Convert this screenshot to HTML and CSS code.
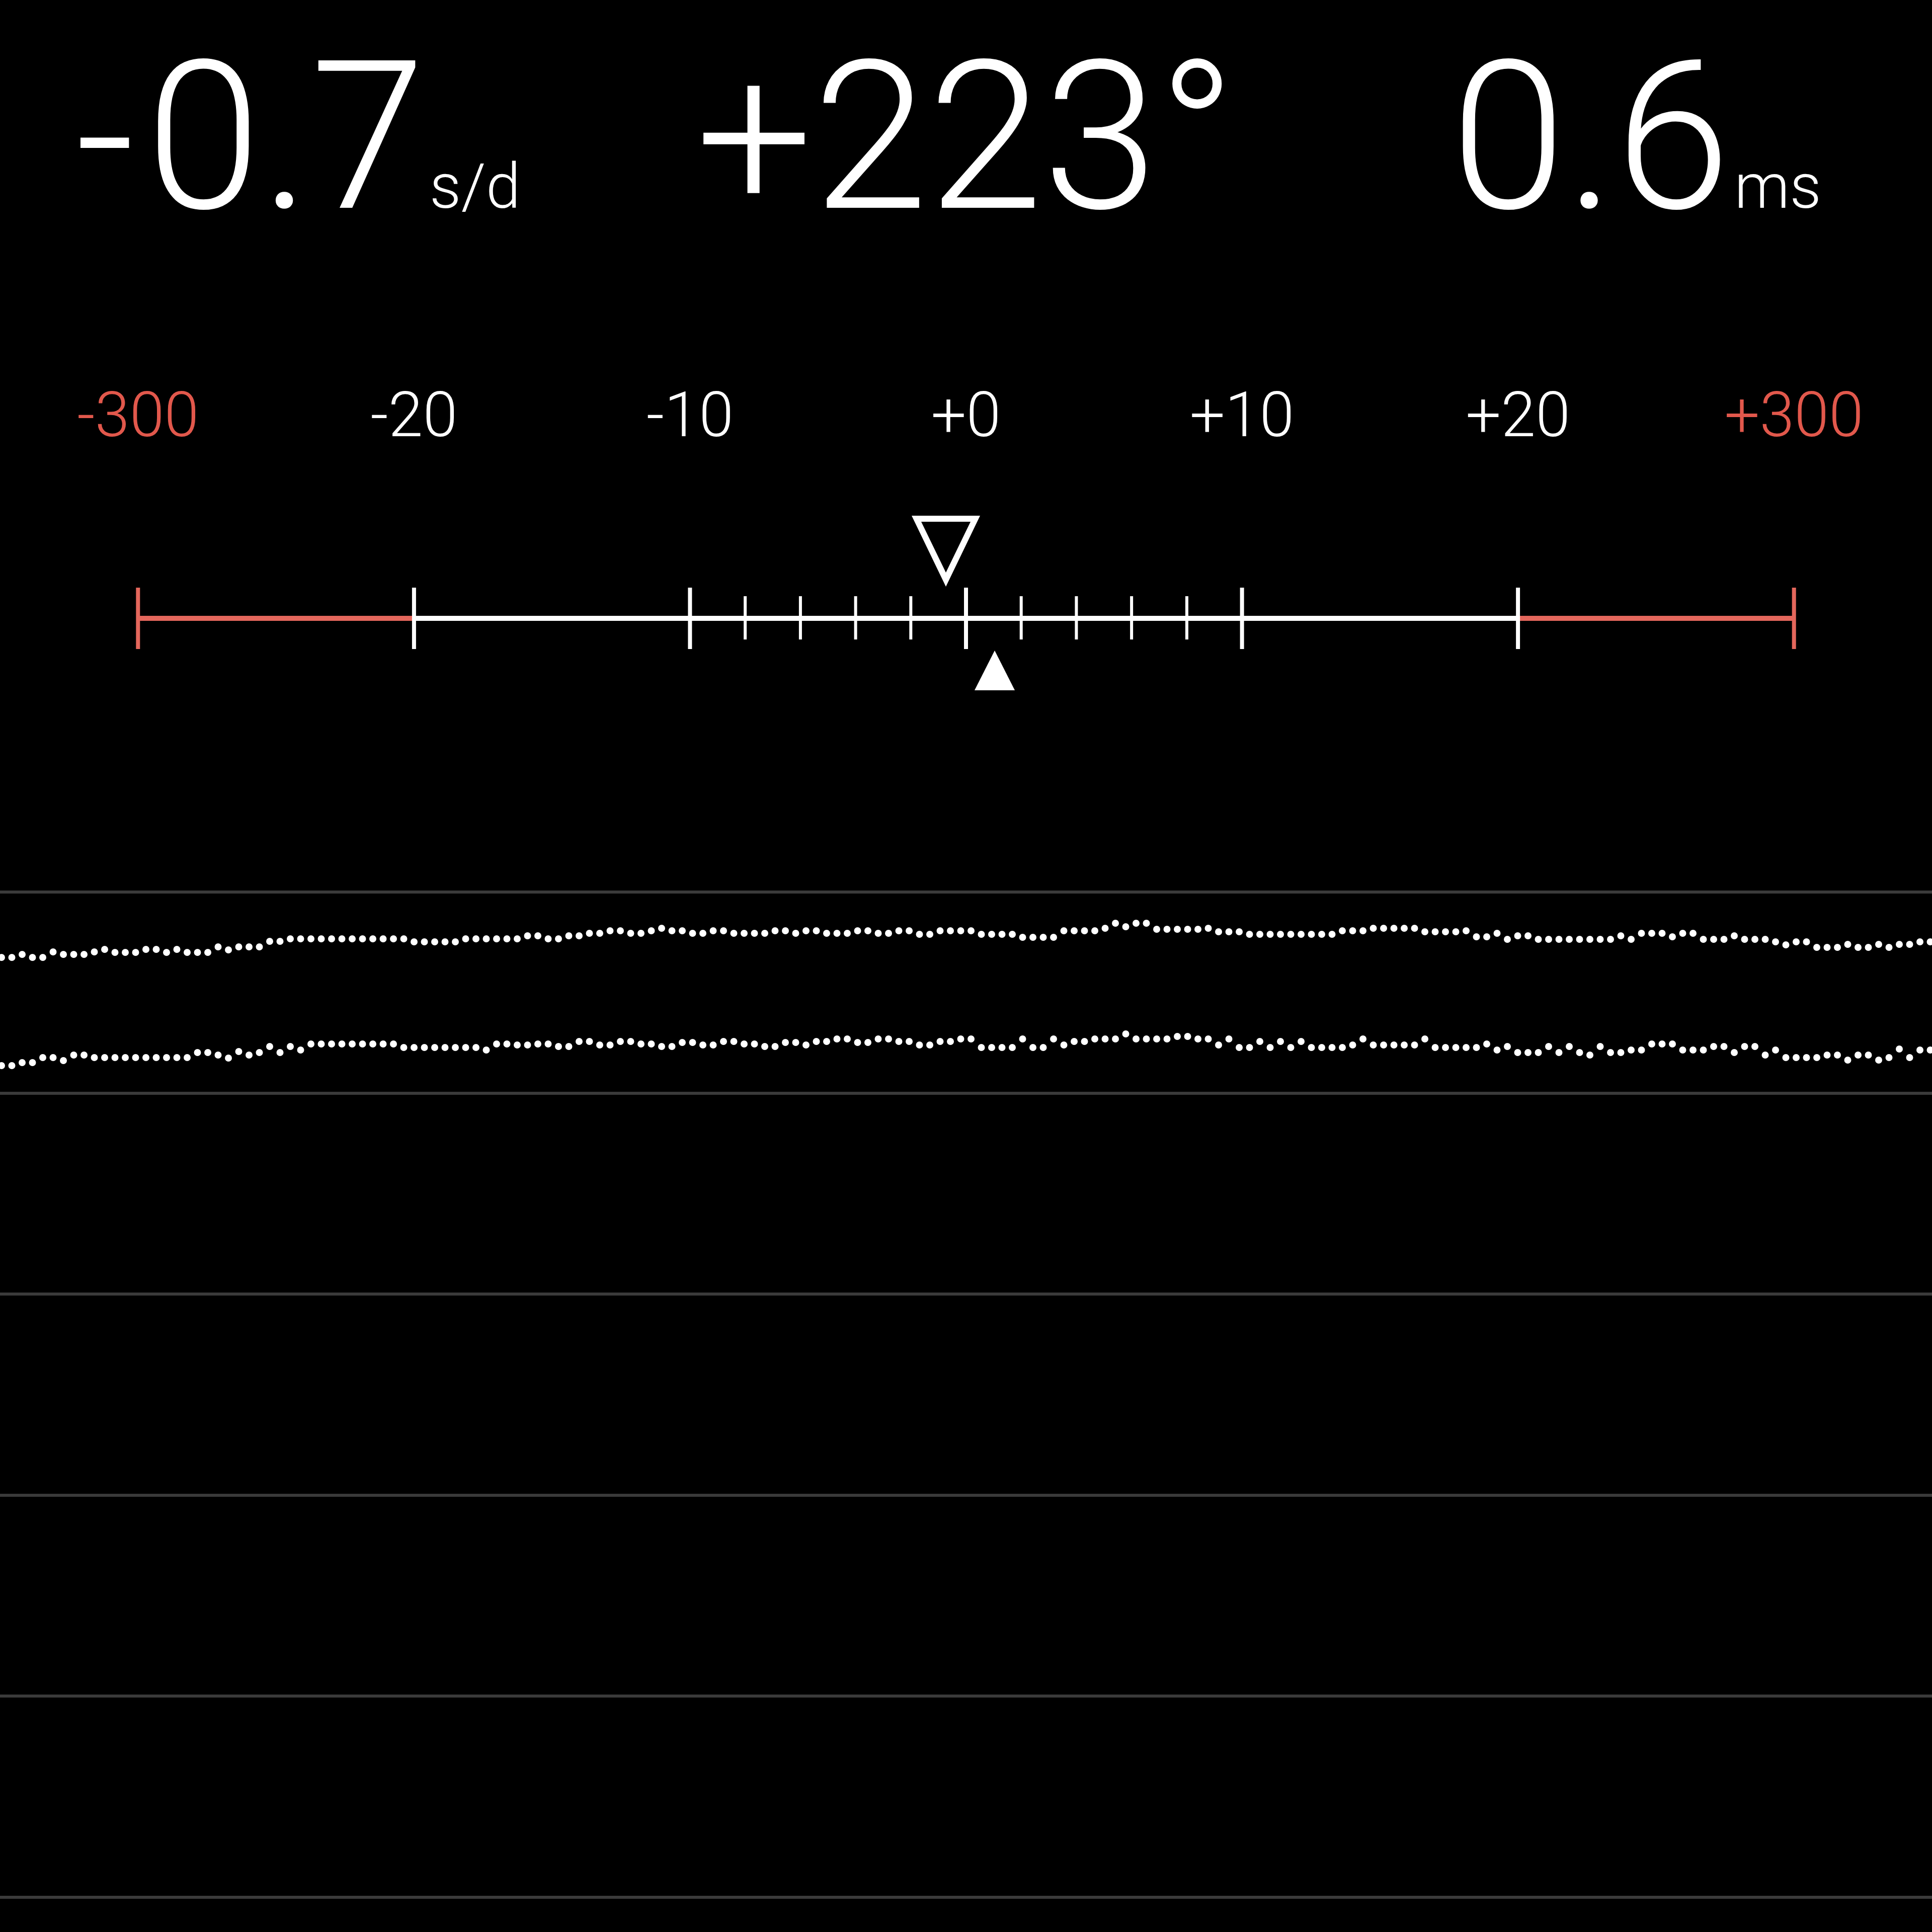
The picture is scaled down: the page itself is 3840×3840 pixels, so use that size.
FILE: index.html
```html
<!DOCTYPE html>
<html lang="en">
<head>
<meta charset="utf-8">
<title>Timegrapher</title>
<link rel="stylesheet" href="styles.css">
</head>
<body>
<main class="tuner">
  <section class="readouts">
    <div class="readout readout--rate"><span class="value"><span class="sign">-</span>0.7</span><span class="unit">s/d</span></div>
    <div class="readout readout--angle"><span class="value">+223°</span></div>
    <div class="readout readout--beat"><span class="value">0.6</span><span class="unit">ms</span></div>
  </section>

  <section class="labels">
    <span class="label label--warn">-300</span>
    <span class="label">-20</span>
    <span class="label">-10</span>
    <span class="label">+0</span>
    <span class="label">+10</span>
    <span class="label">+20</span>
    <span class="label label--warn">+300</span>
  </section>

  <svg class="scale" viewBox="0 1010 3840 380" width="3840" height="380">
    <line class="bar bar--warn" x1="274.3" y1="1229" x2="822.9" y2="1229"/>
    <line class="bar" x1="822.9" y1="1229" x2="3017.1" y2="1229"/>
    <line class="bar bar--warn" x1="3017.1" y1="1229" x2="3565.7" y2="1229"/>

    <line class="tick tick--major tick--warn" x1="274.3" y1="1168" x2="274.3" y2="1290"/>
    <line class="tick tick--major" x1="822.9" y1="1168" x2="822.9" y2="1290"/>
    <line class="tick tick--major" x1="1371.4" y1="1168" x2="1371.4" y2="1290"/>
    <line class="tick tick--major" x1="1920" y1="1168" x2="1920" y2="1290"/>
    <line class="tick tick--major" x1="2468.6" y1="1168" x2="2468.6" y2="1290"/>
    <line class="tick tick--major" x1="3017.1" y1="1168" x2="3017.1" y2="1290"/>
    <line class="tick tick--major tick--warn" x1="3565.7" y1="1168" x2="3565.7" y2="1290"/>

    <line class="tick tick--minor" x1="1481.1" y1="1185" x2="1481.1" y2="1271"/>
    <line class="tick tick--minor" x1="1590.9" y1="1185" x2="1590.9" y2="1271"/>
    <line class="tick tick--minor" x1="1700.6" y1="1185" x2="1700.6" y2="1271"/>
    <line class="tick tick--minor" x1="1810.3" y1="1185" x2="1810.3" y2="1271"/>
    <line class="tick tick--minor" x1="2029.7" y1="1185" x2="2029.7" y2="1271"/>
    <line class="tick tick--minor" x1="2139.4" y1="1185" x2="2139.4" y2="1271"/>
    <line class="tick tick--minor" x1="2249.1" y1="1185" x2="2249.1" y2="1271"/>
    <line class="tick tick--minor" x1="2358.9" y1="1185" x2="2358.9" y2="1271"/>

    <path class="marker marker--target" d="M1812 1025 H1948 L1880 1166 Z M1831 1037 L1880 1138 L1929 1037 Z"/>
    <polygon class="marker marker--current" points="1937,1372 2017,1372 1977,1293"/>
  </svg>

  <section class="chart">
    <div class="chart-row">
      <svg class="trace" id="trace" viewBox="0 1776 3840 394" width="3840" height="394"></svg>
    </div>
    <div class="chart-row"></div>
    <div class="chart-row"></div>
    <div class="chart-row"></div>
    <div class="chart-row"></div>
    <div class="chart-rule"></div>
  </section>
</main>
<script src="script.js"></script>
</body>
</html>
```

FILE: styles.css
```css
html, body {
  margin: 0;
  padding: 0;
  background: #000;
}

body {
  width: 3840px;
  color: #fff;
  font-family: Roboto, "Liberation Sans", sans-serif;
  font-weight: 300;
}

.tuner {
  display: flex;
  flex-direction: column;
}

/* Big readouts */
.readouts {
  display: grid;
  grid-template-columns: 1fr auto 1fr;
  padding-top: 67px;
  font-size: 412px;
  line-height: 1;
  height: 412px;
}

.readout {
  white-space: nowrap;
}

.readout--rate {
  justify-self: start;
  margin-left: 150px;
}

.readout--angle {
  justify-self: center;
}

.readout--beat {
  justify-self: end;
  margin-right: 220px;
}

.sign {
  margin-right: 22px;
}

.unit {
  font-size: 124px;
  line-height: 1;
  margin-left: 8px;
}

/* Scale labels */
.labels {
  display: grid;
  grid-template-columns: repeat(7, 1fr);
  margin-top: 284px;
  font-size: 124px;
  line-height: 1;
  text-align: center;
}

.label--warn {
  color: #e2584c;
}

/* Scale */
.scale {
  display: block;
  margin-top: 123px;
}

.bar {
  stroke: #fff;
  stroke-width: 10;
}

.bar--warn {
  stroke: #e4675c;
}

.tick {
  stroke: #fff;
}

.tick--major {
  stroke-width: 8;
}

.tick--minor {
  stroke-width: 6;
}

.tick--warn {
  stroke: #e4675c;
}

.marker {
  fill: #fff;
  fill-rule: evenodd;
}

/* Chart */
.chart {
  margin-top: 380px;
  display: flex;
  flex-direction: column;
}

.chart-row {
  box-sizing: border-box;
  height: 399.6px;
  border-top: 6px solid #3a3a3a;
}

.chart-rule {
  height: 6px;
  background: #3a3a3a;
}

.trace {
  display: block;
}

.dot {
  fill: #fff;
}
```

FILE: script.js
```js
(function () {
  var TOP = [
    [3,1903],[43,1897],[64,1903],[105,1892],[126,1897],[187,1892],[207,1887],[228,1893],
    [290,1887],[330,1893],[351,1887],[371,1893],[432,1882],[453,1888],[473,1882],[535,1871],
    [576,1866],[821,1872],[924,1866],[1050,1860],[1090,1866],[1130,1860],[1170,1855],
    [1210,1850],[1250,1855],[1290,1850],[1310,1845],[1330,1850],[1370,1855],[1410,1850],
    [1450,1855],[1530,1850],[1570,1855],[1610,1850],[1650,1855],[1700,1850],[1740,1855],
    [1780,1850],[1820,1857],[1860,1850],[1948,1857],[2031,1863],[2110,1850],[2193,1845],
    [2212,1835],[2235,1842],[2257,1835],[2295,1847],[2397,1845],[2420,1852],[2480,1857],
    [2665,1850],[2729,1845],[2828,1852],[2911,1850],[2931,1862],[2972,1855],[2992,1867],
    [3014,1860],[3053,1867],[3218,1860],[3239,1867],[3260,1855],[3300,1855],[3320,1862],
    [3341,1855],[3383,1867],[3443,1860],[3464,1867],[3526,1872],[3546,1878],[3566,1872],
    [3607,1883],[3669,1877],[3689,1883],[3730,1877],[3750,1883],[3770,1877],[3811,1872]
  ];
  var BOTTOM = [
    [6,2118],[35,2112],[75,2102],[115,2108],[136,2097],[177,2102],[381,2092],[422,2097],
    [443,2103],[464,2090],[485,2097],[504,2092],[524,2080],[545,2092],[566,2080],[587,2087],
    [607,2075],[791,2082],[955,2087],[976,2075],[1030,2077],[1070,2075],[1110,2080],
    [1150,2070],[1190,2077],[1230,2070],[1270,2075],[1310,2080],[1350,2072],[1390,2077],
    [1430,2070],[1470,2075],[1510,2080],[1550,2072],[1590,2077],[1630,2070],[1670,2065],
    [1710,2072],[1750,2065],[1790,2070],[1830,2077],[1870,2070],[1900,2065],[1957,2082],
    [2040,2065],[2061,2082],[2082,2065],[2122,2077],[2142,2070],[2184,2065],[2244,2055],
    [2265,2065],[2346,2060],[2388,2065],[2410,2077],[2450,2065],[2471,2082],[2511,2070],
    [2531,2082],[2552,2070],[2573,2082],[2593,2070],[2614,2082],[2696,2077],[2716,2065],
    [2737,2077],[2839,2065],[2860,2082],[2900,2082],[2962,2075],[2983,2087],[3003,2080],
    [3023,2092],[3085,2080],[3106,2092],[3126,2080],[3146,2092],[3167,2097],[3188,2080],
    [3208,2092],[3249,2087],[3290,2075],[3351,2087],[3413,2080],[3453,2092],[3474,2080],
    [3515,2097],[3536,2087],[3556,2102],[3637,2097],[3678,2107],[3699,2097],[3741,2107],
    [3760,2102],[3781,2085],[3802,2102],[3823,2087]
  ];

  function level(points, x) {
    var y = points[0][1];
    for (var i = 0; i < points.length; i++) {
      if (points[i][0] <= x + 8) { y = points[i][1]; } else { break; }
    }
    return y;
  }

  var svg = document.getElementById('trace');
  var ns = 'http://www.w3.org/2000/svg';
  var step = 20.5;
  [TOP, BOTTOM].forEach(function (series) {
    for (var x = 3; x < 3850; x += step) {
      var c = document.createElementNS(ns, 'circle');
      c.setAttribute('class', 'dot');
      c.setAttribute('cx', x.toFixed(1));
      c.setAttribute('cy', level(series, x));
      c.setAttribute('r', '7');
      svg.appendChild(c);
    }
  });
})();
```
